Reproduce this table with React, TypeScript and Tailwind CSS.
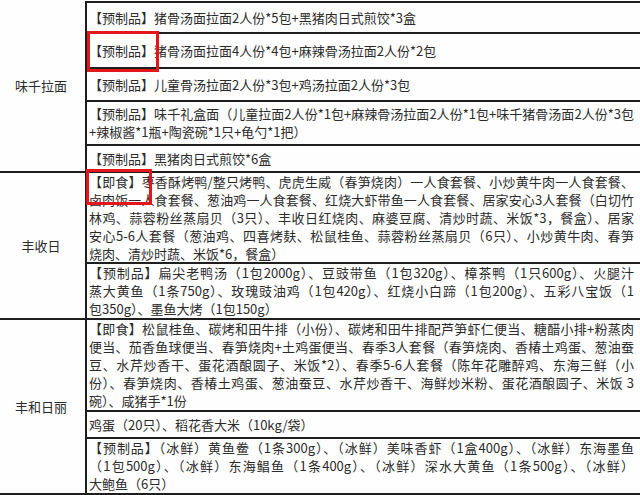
type Row = { h: string; lines: string[]; last?: boolean };
type Group = { label: string; top?: boolean; rows: Row[] };

const GROUPS: Group[] = [
  {
    label: "味千拉面",
    top: true,
    rows: [
      { h: "h-[31px]", lines: ["【预制品】猪骨汤面拉面2人份*5包+黑猪肉日式煎饺*3盒"] },
      { h: "h-[35px]", lines: ["【预制品】猪骨汤面拉面4人份*4包+麻辣骨汤拉面2人份*2包"] },
      { h: "h-[33px]", lines: ["【预制品】儿童骨汤拉面2人份*3包+鸡汤拉面2人份*3包"] },
      {
        h: "h-[44px]",
        lines: [
          "【预制品】味千礼盒面（儿童拉面2人份*1包+麻辣骨汤拉面2人份*1包+味千猪骨汤面2人份*3包",
          "+辣椒酱*1瓶+陶瓷碗*1只+龟勺*1把）",
        ],
      },
      { h: "h-[25px]", lines: ["【预制品】黑猪肉日式煎饺*6盒"], last: true },
    ],
  },
  {
    label: "丰收日",
    rows: [
      {
        h: "h-[91px]",
        lines: [
          "【即食】枣香酥烤鸭/整只烤鸭、虎虎生威（春笋烧肉）一人食套餐、小炒黄牛肉一人食套餐、",
          "卤肉饭一人食套餐、葱油鸡一人食套餐、红烧大虾带鱼一人食套餐、居家安心3人套餐（白切竹",
          "林鸡、蒜蓉粉丝蒸扇贝（3只）、丰收日红烧肉、麻婆豆腐、清炒时蔬、米饭*3，餐盒）、居家",
          "安心5-6人套餐（葱油鸡、四喜烤麸、松鼠桂鱼、蒜蓉粉丝蒸扇贝（6只）、小炒黄牛肉、春笋",
          "烧肉、清炒时蔬、米饭*6，餐盒）",
        ],
      },
      {
        h: "h-[54px]",
        lines: [
          "【预制品】扁尖老鸭汤（1包2000g）、豆豉带鱼（1包320g）、樟茶鸭（1只600g）、火腿汁",
          "蒸大黄鱼（1条750g）、玫瑰豉油鸡（1包420g）、红烧小白蹄（1包200g）、五彩八宝饭（1",
          "包350g）、墨鱼大烤（1包150g）",
        ],
        last: true,
      },
    ],
  },
  {
    label: "丰和日丽",
    rows: [
      {
        h: "h-[92px]",
        lines: [
          "【即食】松鼠桂鱼、碳烤和田牛排（小份）、碳烤和田牛排配芦笋虾仁便当、糖醋小排+粉蒸肉",
          "便当、茄香鱼球便当、春笋烧肉+土鸡蛋便当、春季3人套餐（春笋烧肉、香椿土鸡蛋、葱油蚕",
          "豆、水芹炒香干、蛋花酒酿圆子、米饭*2）、春季5-6人套餐（陈年花雕醉鸡、东海三鲜（小",
          "份）、春笋烧肉、香椿土鸡蛋、葱油蚕豆、水芹炒香干、海鲜炒米粉、蛋花酒酿圆子、米饭 3",
          "碗）、咸猪手*1份",
        ],
      },
      { h: "h-[27px]", lines: ["鸡蛋（20只）、稻花香大米（10kg/袋）"] },
      {
        h: "h-[54px]",
        lines: [
          "【预制品】（冰鲜）黄鱼鲞（1条300g）、（冰鲜）美味香虾（1盒400g）、（冰鲜）东海墨鱼",
          "（1包500g）、（冰鲜）东海鲳鱼（1条400g）、（冰鲜）深水大黄鱼（1条500g）、（冰鲜）",
          "大鲍鱼（6只）",
        ],
        last: true,
      },
    ],
  },
];

function Cell({ row }: { row: Row }) {
  return (
    <div className={`${row.h} flex items-center pl-[2px] pr-[6px] ${row.last ? "" : "border-b-2 border-[#1e1e1e]"}`}>
      <div className="w-full leading-[18px]">
        {row.lines.map((line, i) => (
          <div
            key={i}
            className={i < row.lines.length - 1 ? "text-justify [text-align-last:justify]" : ""}
          >
            {line}
          </div>
        ))}
      </div>
    </div>
  );
}

export default function App() {
  return (
    <div
      className="relative w-[640px] h-[495px] overflow-hidden bg-[#fefefe] text-[13px] text-[#2b2b2b]"
      style={{ fontFamily: '"Noto Sans CJK SC", "Noto Sans", sans-serif' }}
    >
      <div className="pt-px">
        {GROUPS.map((g) => (
          <div key={g.label} className="flex border-b-2 border-[#1e1e1e]">
            <div className="w-[85px] shrink-0 flex items-center justify-center pr-[3px]">{g.label}</div>
            <div className={`flex-1 border-l-2 border-[#1e1e1e] ${g.top ? "border-t-2" : ""}`}>
              {g.rows.map((r, i) => (
                <Cell key={i} row={r} />
              ))}
            </div>
          </div>
        ))}
        <div className="h-[4px] bg-[#ebebeb]" />
      </div>

      {/* red highlight boxes */}
      <div className="absolute left-[87px] top-[31px] w-[72px] h-[41px] border-[3px] border-[#e3161c]" />
      <div className="absolute left-[86px] top-[169px] w-[66px] h-[36px] border-[3px] border-[#e3161c]" />
    </div>
  );
}
